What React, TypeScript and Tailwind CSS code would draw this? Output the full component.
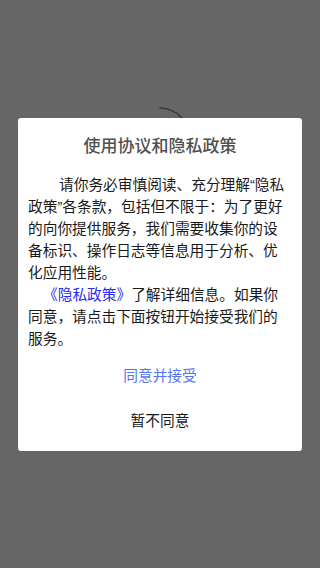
const font = { fontFamily: '"Liberation Sans", "Noto Sans CJK SC", sans-serif' };

export default function App() {
  return (
    <div className="relative h-[568px] w-[320px] overflow-hidden bg-[#666666]" style={font}>
      {/* loading spinner behind the dialog */}
      <svg className="absolute left-[120px] top-[98px]" width="80" height="80" viewBox="0 0 80 80">
        <path d="M40 10 A30 30 0 0 1 62 20" fill="none" stroke="#3a3a3a" strokeWidth="1.5" strokeLinecap="round" />
      </svg>

      <div className="absolute inset-0 flex items-start justify-center pt-[118px]">
        <div className="w-[284px] rounded-[3px] bg-white px-[10px] pt-[17px] pb-[7px]">
          <h2 className="text-center text-[17px] font-medium leading-[24px] text-[#505050]">使用协议和隐私政策</h2>

          <div className="mt-[15px] text-[14.7px] leading-[22px] text-[#1a1a1a]">
            <p className="indent-[31px]">
              请你务必审慎阅读、充分理解“隐私政策”各条款，包括但不限于：为了更好的向你提供服务，我们需要收集你的设备标识、操作日志等信息用于分析、优化应用性能。
            </p>
            <p className="indent-[15px]">
              <span className="text-[#2a2aee]">《隐私政策》</span>了解详细信息。如果你同意，请点击下面按钮开始接受我们的服务。
            </p>
          </div>

          <div className="mt-[4px] flex flex-col items-center">
            <button className="h-[44px] w-full text-[14.7px] text-[#5577ee]">同意并接受</button>
            <button className="h-[46px] w-full text-[14.7px] text-[#1a1a1a]">暂不同意</button>
          </div>
        </div>
      </div>
    </div>
  );
}
